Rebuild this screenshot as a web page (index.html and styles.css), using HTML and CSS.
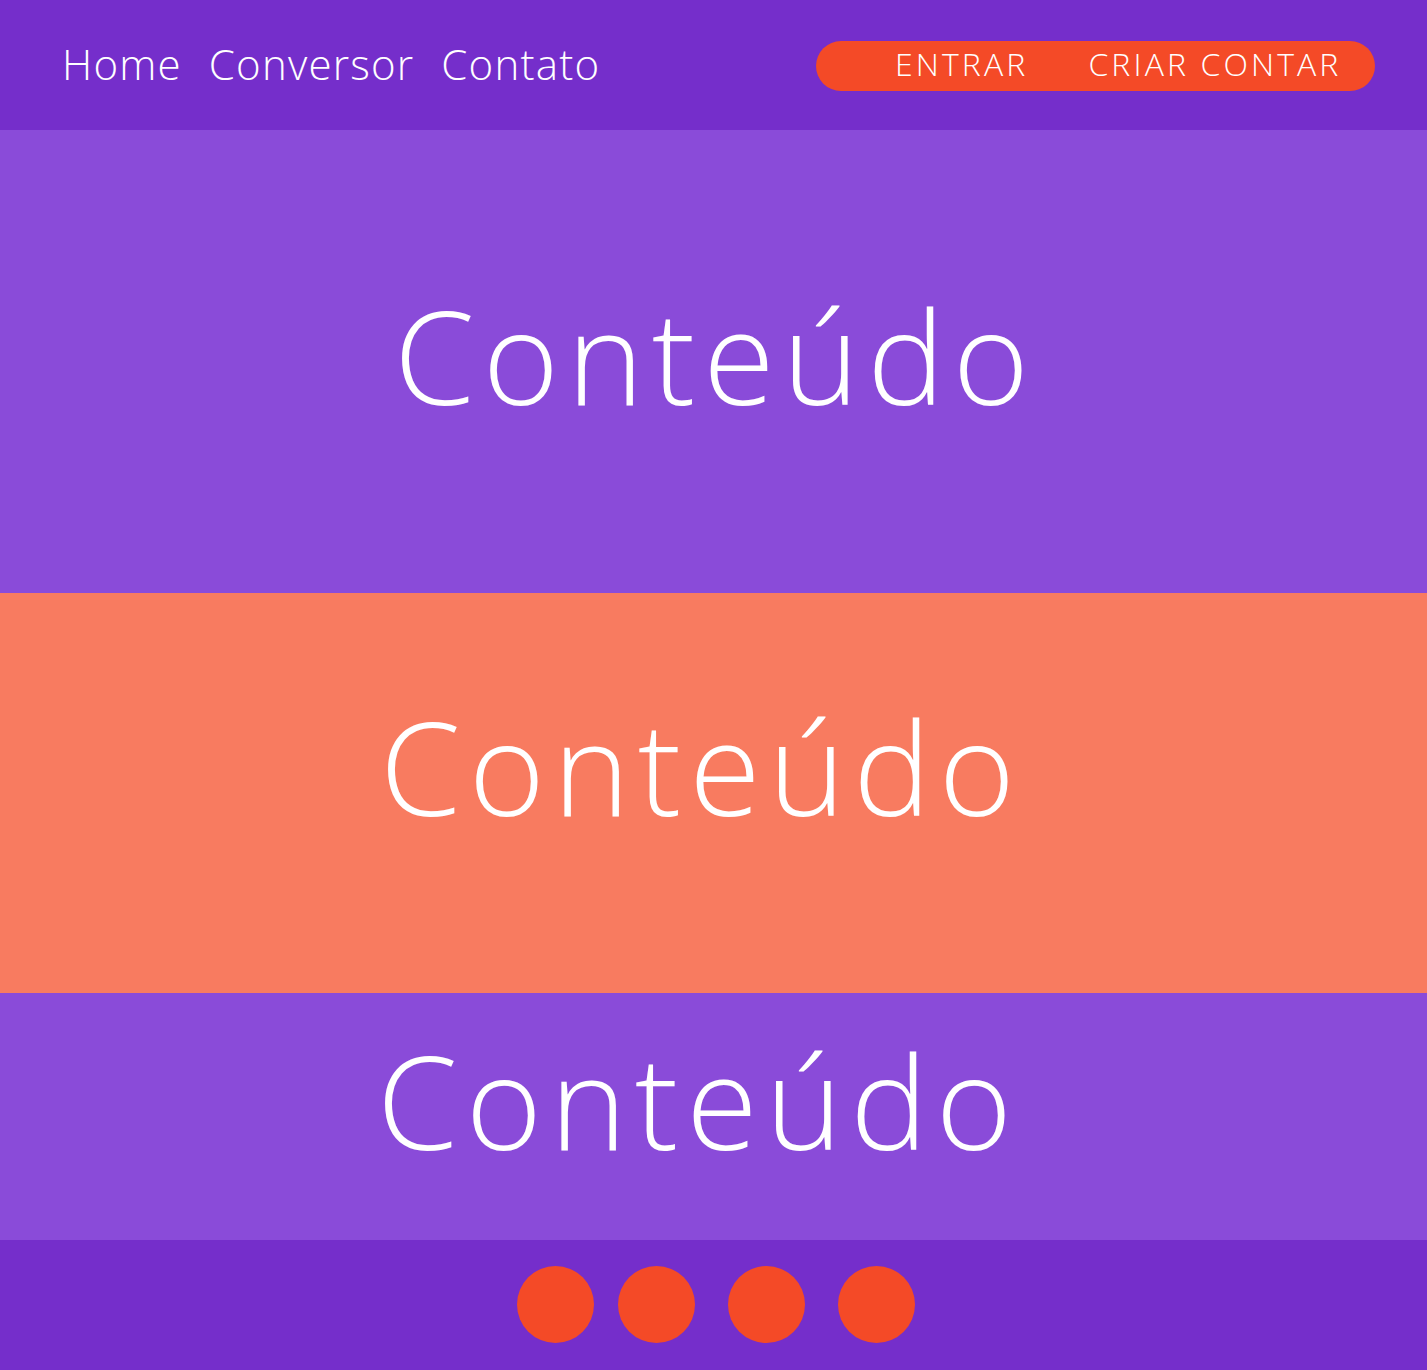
FILE: index.html
```html
<!DOCTYPE html>
<html lang="pt-BR">
<head>
<meta charset="utf-8">
<title>Conteúdo</title>
<link rel="stylesheet" href="styles.css">
</head>
<body>
<header class="topbar">
  <nav class="nav">
    <a class="nav-link" href="#">Home</a>
    <a class="nav-link" href="#">Conversor</a>
    <a class="nav-link" href="#">Contato</a>
  </nav>
  <div class="auth">
    <a class="auth-link" href="#">ENTRAR</a>
    <a class="auth-link" href="#">CRIAR CONTAR</a>
  </div>
</header>
<main>
  <section class="block block-purple block-first"><h2 class="block-title">Conteúdo</h2></section>
  <section class="block block-orange"><h2 class="block-title">Conteúdo</h2></section>
  <section class="block block-purple block-last"><h2 class="block-title">Conteúdo</h2></section>
</main>
<footer class="footer">
  <span class="dot dot-first"></span>
  <span class="dot"></span>
  <span class="dot"></span>
  <span class="dot"></span>
</footer>
</body>
</html>
```
FILE: styles.css
```css
* { box-sizing: border-box; }
html, body { margin: 0; padding: 0; }
body {
  font-family: "Open Sans", "DejaVu Sans", sans-serif;
  color: #fff;
  background: #752ecb;
}
a { color: #fff; text-decoration: none; }

.topbar {
  height: 130px;
  background: #752ecb;
  display: flex;
  align-items: center;
  justify-content: space-between;
  padding: 0 52px 0 62px;
}
.nav {
  display: flex;
  gap: 27px;
  font-size: 42px;
  font-weight: 300;
  letter-spacing: 1.2px;
  line-height: 1;
  padding-bottom: 2px;
}
.auth {
  display: flex;
  align-items: center;
  gap: 60px;
  height: 50px;
  width: 559px;
  margin-top: 2px;
  padding: 0 0 4px 79px;
  border-radius: 25px;
  background: #f44a27;
  font-size: 32px;
  font-weight: 300;
  letter-spacing: 3.1px;
  line-height: 1;
}

.block {
  display: flex;
  align-items: center;
  justify-content: center;
}
.block-purple { background: #8a4bd9; }
.block-orange {
  background: #f87b60;
  height: 400px;
  padding: 0 24px 54px 0;
}
.block-first { height: 463px; padding: 0 0 14px 4px; }
.block-last { height: 247px; padding: 0 30px 34px 0; }
.block-title {
  margin: 0;
  font-size: 130px;
  font-weight: 300;
  letter-spacing: 8px;
  line-height: 1;
}

.footer {
  height: 130px;
  background: #752ecb;
  display: flex;
  align-items: center;
  justify-content: center;
  gap: 33px;
  padding: 0 0 2px 5px;
}
.dot {
  width: 77px;
  height: 77px;
  border-radius: 50%;
  background: #f44a27;
}
.dot-first { margin-right: -9px; }
```
